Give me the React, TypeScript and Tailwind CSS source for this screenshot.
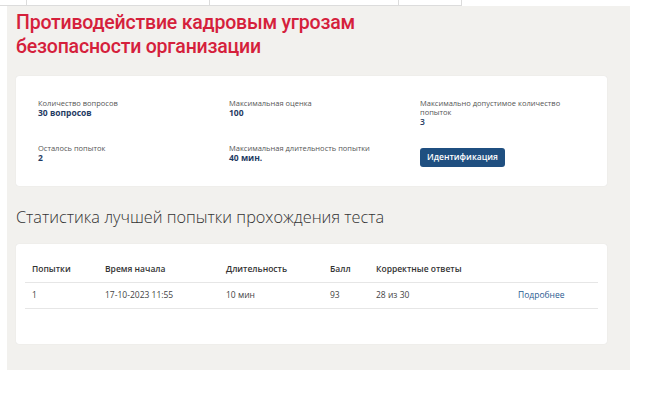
import { FC } from 'react'

const info = [
	{ label: 'Количество вопросов', value: '30 вопросов', bold: true },
	{ label: 'Максимальная оценка', value: '100', bold: true },
	{ label: 'Максимально допустимое количество попыток', value: '3', bold: false },
	{ label: 'Осталось попыток', value: '2', bold: true },
	{ label: 'Максимальная длительность попытки', value: '40 мин.', bold: true },
]

const columns = ['Попытки', 'Время начала', 'Длительность', 'Балл', 'Корректные ответы', '']
const row = ['1', '17-10-2023 11:55', '10 мин', '93', '28 из 30']

const InfoItem: FC<{ label: string; value: string; bold: boolean }> = ({ label, value, bold }) => (
	<div className="flex flex-col pt-[1px]">
		<span className="text-[7.5px] leading-[9px] text-[#555] w-[150px]">{label}</span>
		<span className={`text-[8.5px] leading-[9px] text-[#1f3b63] ${bold ? 'font-bold' : 'font-semibold'}`}>{value}</span>
	</div>
)

const App: FC = () => {
	return (
		<div className="w-[645px] h-[410px] bg-white overflow-hidden font-['Open_Sans',sans-serif]">
			<div className="flex h-[6px] w-[462px] border-b border-[#dcdcdc]">
				<div className="w-[27px] border-r border-[#dcdcdc]" />
				<div className="w-[183px] border-r border-[#dcdcdc]" />
				<div className="w-[189px] border-r border-[#dcdcdc]" />
				<div className="w-[63px] border-r border-[#dcdcdc]" />
			</div>
			<div className="ml-[7px] w-[623px] h-[364px] bg-[#f2f1ee] pl-[9px] pt-[5px]">
				<h1 className="text-[19.5px] leading-[24px] font-medium text-[#d5203b] font-['Roboto',sans-serif] tracking-[-0.2px]">
					Противодействие кадровым угрозам
					<br />
					безопасности организации
				</h1>
				<div className="mt-[17px] w-[591px] h-[110px] bg-white rounded-[3px] shadow-[0_0_1px_rgba(0,0,0,0.12)] pl-[22px] pt-[22px]">
					<div className="grid grid-cols-[191px_191px_178px] grid-rows-[44px_auto]">
						{info.slice(0, 3).map((item) => (
							<InfoItem key={item.label} {...item} />
						))}
						{info.slice(3).map((item) => (
							<div key={item.label} className="pt-[1px]">
								<InfoItem {...item} />
							</div>
						))}
						<div>
							<button
								type="button"
								className="w-[85px] h-[19px] rounded-[3px] bg-[#1f4f80] text-white text-[8.5px] font-semibold"
							>
								Идентификация
							</button>
						</div>
					</div>
				</div>
				<h2 className="mt-[20px] text-[16.3px] leading-[22px] font-light text-[#333]">
					Статистика лучшей попытки прохождения теста
				</h2>
				<div className="mt-[16px] w-[591px] h-[100px] bg-white rounded-[3px] shadow-[0_0_1px_rgba(0,0,0,0.12)] px-[9px] pt-[13px]">
					<div className="grid grid-cols-[73px_121px_104px_46px_142px_87px] h-[26px] items-center border-b border-[#e6e6e6] text-[8.5px] font-semibold text-[#333]">
						{columns.map((c, i) => (
							<span key={i} className="pl-[7px]">
								{c}
							</span>
						))}
					</div>
					<div className="grid grid-cols-[73px_121px_104px_46px_142px_87px] h-[26px] items-center border-b border-[#e6e6e6] text-[8.5px] text-[#444]">
						{row.map((c, i) => (
							<span key={i} className="pl-[7px]">
								{c}
							</span>
						))}
						<span className="pl-[7px] text-[#2a5b91] cursor-pointer">Подробнее</span>
					</div>
				</div>
			</div>
		</div>
	)
}

export default App
